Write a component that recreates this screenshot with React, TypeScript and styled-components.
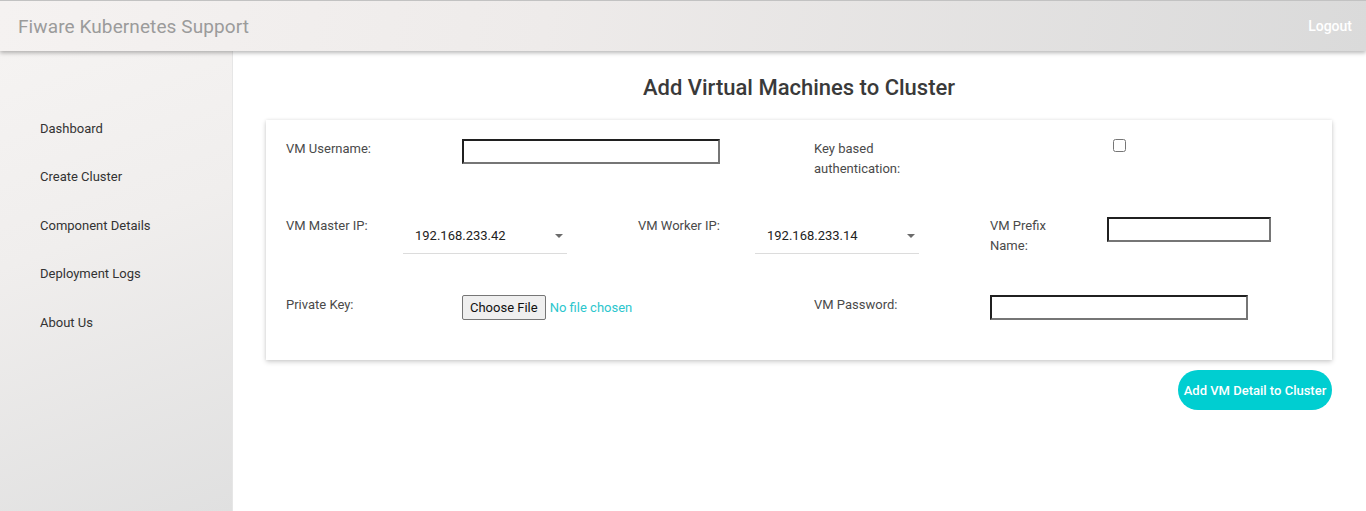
import React from "react";
import styled, { createGlobalStyle } from "styled-components";

const GlobalStyle = createGlobalStyle`
  html, body { margin: 0; padding: 0; background: #ffffff; }
  body { font-family: Roboto, "Liberation Sans", Arial, sans-serif; }
  * { box-sizing: border-box; }
`;

const Page = styled.div`
  display: flex;
  flex-direction: column;
  min-height: 100vh;
`;

const Header = styled.header`
  position: relative;
  z-index: 2;
  height: 51px;
  display: flex;
  align-items: center;
  justify-content: space-between;
  padding: 0 14px 0 18px;
  border-top: 1px solid #c2c2c2;
  background: linear-gradient(100deg, #f5f2f1 0%, #eeebea 40%, #dadada 100%);
  box-shadow: 0 2px 4px rgba(0, 0, 0, 0.28);
`;

const Brand = styled.div`
  font-size: 19px;
  color: #9b9b9b;
  letter-spacing: 0.1px;
`;

const Logout = styled.div`
  font-size: 14px;
  font-weight: 500;
  color: #ffffff;
`;

const Body = styled.div`
  flex: 1;
  display: flex;
`;

const Sidebar = styled.nav`
  width: 233px;
  flex: none;
  padding-top: 53px;
  border-right: 1px solid #e6e6e6;
  background: linear-gradient(160deg, #f5f3f2 0%, #f0eeed 40%, #e0e0e0 100%);
`;

const NavItem = styled.div`
  height: 48.5px;
  display: flex;
  align-items: center;
  padding-left: 40px;
  font-size: 13px;
  color: #333333;
`;

const Main = styled.main`
  flex: 1;
  padding: 24px 34px 0 33px;
`;

const Title = styled.h1`
  margin: 0 0 19px;
  text-align: center;
  font-size: 22px;
  line-height: 26px;
  font-weight: 500;
  color: #3a3a3a;
`;

const Card = styled.section`
  background: #ffffff;
  padding: 19px 20px 40px 20px;
  box-shadow: 0 2px 5px rgba(0, 0, 0, 0.18), 0 0 3px rgba(0, 0, 0, 0.08);
`;

const FormRow = styled.div<{ $cols: string; $last?: boolean }>`
  display: grid;
  grid-template-columns: ${(p) => p.$cols};
  align-items: start;
  min-height: ${(p) => (p.$last ? "25px" : "40px")};
  margin-bottom: ${(p) => (p.$last ? "0" : "38px")};
`;

const Label = styled.div<{ $narrow?: boolean; $shift?: boolean }>`
  font-size: 13px;
  line-height: 20px;
  color: #4a4a4a;
  margin-top: ${(p) => (p.$shift ? "-1px" : "0")};
  max-width: ${(p) => (p.$narrow ? "94px" : "none")};
`;

const TextInput = styled.input<{ $w: number }>`
  width: ${(p) => p.$w}px;
  height: 25px;
  margin-top: 0;
  padding: 1px 4px;
  font-size: 13px;
  background: #ffffff;
  border-style: solid;
  border-width: 2px;
  border-color: #202020 #767676 #767676 #202020;
  outline: none;
`;

const Checkbox = styled.input`
  width: 13px;
  height: 13px;
  margin: 0 0 0 9px;
`;

const SelectBox = styled.div`
  width: 164px;
  height: 30px;
  margin-top: 7px;
  display: flex;
  align-items: center;
  justify-content: space-between;
  padding: 0 4px 6px 12px;
  border-bottom: 1px solid #dcdcdc;
  font-size: 13px;
  color: #222222;
`;

const Caret = styled.span`
  width: 0;
  height: 0;
  border-left: 4.5px solid transparent;
  border-right: 4.5px solid transparent;
  border-top: 4.5px solid #6b6b6b;
`;

const FileField = styled.div`
  display: flex;
  align-items: center;
  gap: 4px;
`;

const FileButton = styled.button`
  height: 25px;
  padding: 0 7px;
  font-family: Roboto, "Liberation Sans", Arial, sans-serif;
  font-size: 13px;
  color: #111111;
  background: #efefef;
  border: 1px solid #767676;
  border-radius: 2px;
`;

const FileStatus = styled.span`
  font-size: 13px;
  color: #2cc6cd;
`;

const Actions = styled.div`
  display: flex;
  justify-content: flex-end;
  margin-top: 10px;
`;

const SubmitButton = styled.button`
  width: 154px;
  height: 40px;
  border: none;
  border-radius: 20px;
  background: #00ced1;
  color: #ffffff;
  font-family: Roboto, "Liberation Sans", Arial, sans-serif;
  font-size: 13px;
  font-weight: 500;
  padding: 0;
`;

const navItems = [
  "Dashboard",
  "Create Cluster",
  "Component Details",
  "Deployment Logs",
  "About Us",
];

const Select = ({ value }: { value: string }) => (
  <SelectBox>
    <span>{value}</span>
    <Caret />
  </SelectBox>
);

export default function App() {
  return (
    <Page>
      <GlobalStyle />
      <Header>
        <Brand>Fiware Kubernetes Support</Brand>
        <Logout>Logout</Logout>
      </Header>
      <Body>
        <Sidebar>
          {navItems.map((item) => (
            <NavItem key={item}>{item}</NavItem>
          ))}
        </Sidebar>
        <Main>
          <Title>Add Virtual Machines to Cluster</Title>
          <Card>
            <FormRow $cols="176px 352px 290px auto">
              <Label>VM Username:</Label>
              <TextInput $w={258} type="text" />
              <Label $narrow>Key based authentication:</Label>
              <Checkbox type="checkbox" />
            </FormRow>
            <FormRow $cols="117px 235px 117px 235px 117px auto">
              <Label $shift>VM Master IP:</Label>
              <Select value="192.168.233.42" />
              <Label $shift>VM Worker IP:</Label>
              <Select value="192.168.233.14" />
              <Label $shift $narrow>VM Prefix Name:</Label>
              <TextInput $w={164} type="text" />
            </FormRow>
            <FormRow $cols="176px 352px 176px auto" $last>
              <Label>Private Key:</Label>
              <FileField>
                <FileButton type="button">Choose File</FileButton>
                <FileStatus>No file chosen</FileStatus>
              </FileField>
              <Label>VM Password:</Label>
              <TextInput $w={258} type="password" />
            </FormRow>
          </Card>
          <Actions>
            <SubmitButton type="button">Add VM Detail to Cluster</SubmitButton>
          </Actions>
        </Main>
      </Body>
    </Page>
  );
}
